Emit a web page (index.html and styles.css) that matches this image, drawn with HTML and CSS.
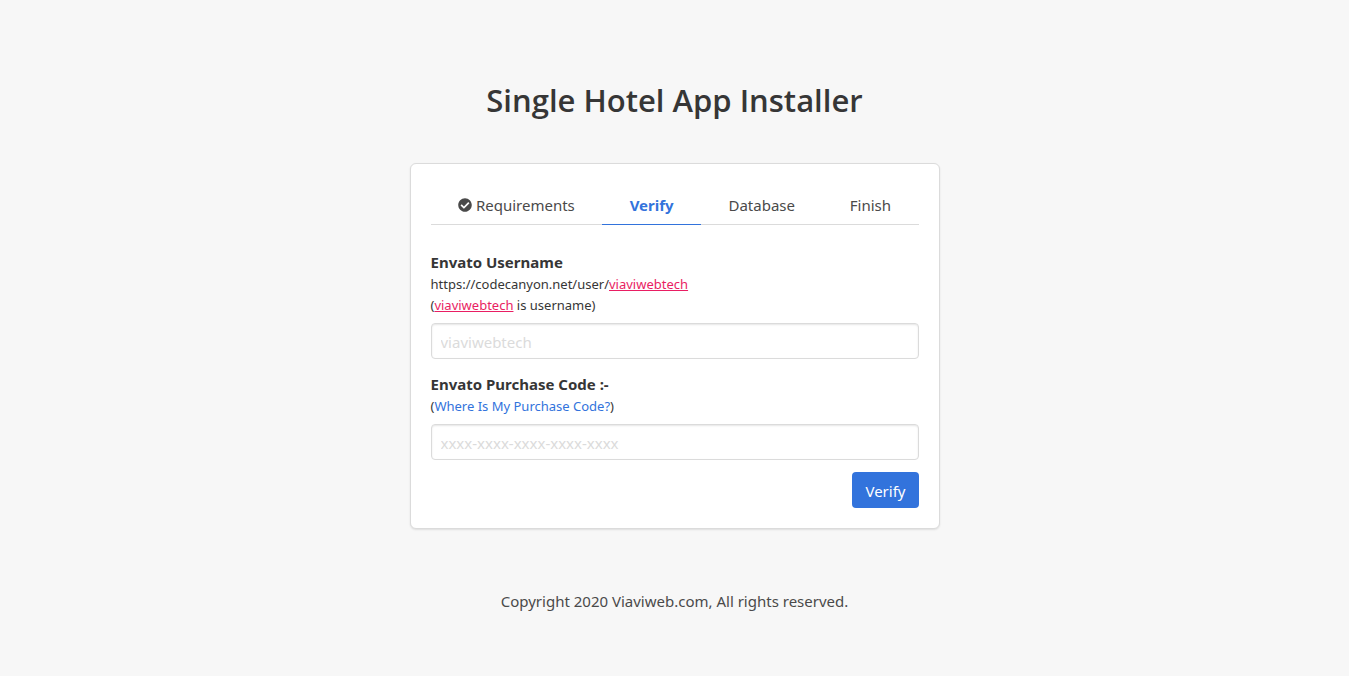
FILE: index.html
```html
<!DOCTYPE html>
<html lang="en">
<head>
<meta charset="utf-8">
<meta name="viewport" content="width=device-width, initial-scale=1">
<title>Single Hotel App Installer</title>
<link rel="stylesheet" href="styles.css">
</head>
<body>
<main class="page">
  <h1 class="title">Single Hotel App Installer</h1>
  <section class="box">
    <ul class="tabs">
      <li class="tab"><svg class="icon" viewBox="0 0 512 512" aria-hidden="true"><path d="M504 256c0 137-111 248-248 248S8 393 8 256 119 8 256 8s248 111 248 248zM227.300 387.300l184-184c6.200-6.200 6.200-16.400 0-22.600l-22.600-22.600c-6.200-6.200-16.400-6.200-22.600 0L216 308.100l-70.100-70.100c-6.200-6.200-16.400-6.200-22.600 0l-22.600 22.600c-6.200 6.200-6.200 16.400 0 22.600l104 104c6.200 6.200 16.400 6.200 22.600 0z"/></svg><span>Requirements</span></li>
      <li class="tab active">Verify</li>
      <li class="tab">Database</li>
      <li class="tab">Finish</li>
    </ul>
    <form class="form">
      <div class="field">
        <label class="label" for="username">Envato Username</label>
        <p class="help">https://codecanyon.net/user/<span class="mark">viaviwebtech</span><br>(<span class="mark">viaviwebtech</span> is username)</p>
        <input class="input" id="username" type="text" placeholder="viaviwebtech">
      </div>
      <div class="field">
        <label class="label" for="code">Envato Purchase Code :-</label>
        <p class="help">(<a class="link" href="#">Where Is My Purchase Code?</a>)</p>
        <input class="input" id="code" type="text" placeholder="xxxx-xxxx-xxxx-xxxx-xxxx">
      </div>
      <div class="actions"><button class="button" type="submit">Verify</button></div>
    </form>
  </section>
  <footer class="footer">Copyright 2020 Viaviweb.com, All rights reserved.</footer>
</main>
</body>
</html>
```
FILE: styles.css
```css
* { box-sizing: border-box; margin: 0; padding: 0; }
body {
  background: #f7f7f7;
  color: #4a4a4a;
  font: 15px/24px "Noto Sans", "Open Sans", sans-serif;
}
.page { display: flex; flex-direction: column; align-items: center; padding: 79px 16px 60px; }
.title { color: #363636; font: 600 31px/42px "Open Sans", sans-serif; text-align: center; }
.box {
  width: 100%;
  max-width: 530px;
  margin-top: 42px;
  padding: 20px;
  background: #fff;
  border: 1px solid #dbdbdb;
  border-radius: 6px;
  box-shadow: 0 1px 2px rgba(10, 10, 10, .1);
}
.tabs { display: flex; list-style: none; border-bottom: 1px solid #dbdbdb; }
.tab {
  display: flex;
  flex: 1 1 auto;
  align-items: center;
  justify-content: center;
  gap: 4px;
  margin-bottom: -1px;
  padding: 9px 16px 7px;
  border-bottom: 1px solid transparent;
}
.active { color: #3273dc; font-weight: 700; border-bottom-color: #3273dc; }
.icon { width: 14px; height: 14px; fill: #4a4a4a; }
.form { margin-top: 24px; }
.field { margin-bottom: 12px; }
.label { display: block; padding-top: 1px; color: #363636; font-weight: 700; }
.help { color: #363636; font-size: 13px; line-height: 21px; }
.mark { color: #e91e63; text-decoration: underline; }
.link { color: #3273dc; text-decoration: none; }
.input {
  display: block;
  width: 100%;
  height: 36px;
  margin-top: 7px;
  padding: 2px 9px 0;
  border: 1px solid #dbdbdb;
  border-radius: 4px;
  box-shadow: inset 0 1px 2px rgba(10, 10, 10, .1);
  color: #363636;
  font: inherit;
}
.input::placeholder { color: #dbdbdb; }
.actions { display: flex; justify-content: flex-end; }
.button {
  height: 36px;
  padding: 2px 13px 0;
  border: 0;
  border-radius: 4px;
  background: #3273dc;
  color: #fff;
  font: inherit;
}
.footer { margin-top: 60px; text-align: center; }
```
